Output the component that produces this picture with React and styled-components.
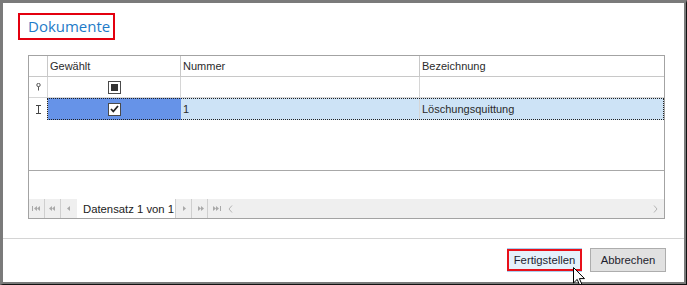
import React from 'react'
import styled, {createGlobalStyle} from 'styled-components'

const Global = createGlobalStyle`
  html, body {
    margin: 0;
    padding: 0;
    background: #fff;
  }
`

const Window = styled.div`
  position: relative;
  width: 687px;
  height: 285px;
  box-sizing: border-box;
  border-top: 3px solid #7a7a7a;
  border-left: 3px solid #7a7a7a;
  border-right: 1px solid #111;
  border-bottom: 1px solid #111;
  box-shadow: inset -2px -2px 0 #7a7a7a;
  background: #fff;
  overflow: hidden;
  display: flex;
  flex-direction: column;
  font-family: "Liberation Sans", Arial, sans-serif;
`

const TitleBox = styled.div`
  align-self: flex-start;
  margin: 10px 0 0 15px;
  width: 97px;
  height: 27px;
  box-sizing: border-box;
  border: 2px solid #e3000f;
  padding-left: 8px;
  line-height: 22px;
  font-family: "Open Sans", "Noto Sans", sans-serif;
  font-size: 15px;
  color: #1e7bc8;
`

const Grid = styled.div`
  margin: 15px 0 0 25px;
  width: 637px;
  height: 164px;
  box-sizing: border-box;
  border: 1px solid #a3a3a3;
  display: flex;
  flex-direction: column;
  font-size: 11px;
  color: #2b2b2b;
`

const Row = styled.div`
  position: relative;
  display: grid;
  grid-template-columns: 19px 133px 239px 1fr;
  height: ${p => p.h}px;
  box-sizing: border-box;
  border-bottom: ${p => (p.line ? `1px solid ${p.line}` : 'none')};

  ${p => p.focused && `
    &::after {
      content: '';
      position: absolute;
      left: 18px;
      right: 0;
      top: 0;
      bottom: 0;
      border: 1px dotted #222;
      pointer-events: none;
    }
  `}
`

const Cell = styled.div`
  display: flex;
  align-items: center;
  justify-content: ${p => (p.center ? 'center' : 'flex-start')};
  padding-left: ${p => (p.center ? 0 : 2)}px;
  border-right: ${p => (p.last ? 'none' : `1px solid ${p.line || '#d6d6d6'}`)};
  background: ${p => p.bg || 'transparent'};
  white-space: nowrap;
  overflow: hidden;
`

const Check = styled.span`
  width: 13px;
  height: 13px;
  box-sizing: border-box;
  border: 1px solid #4a4a4a;
  background: #fff;
  display: flex;
  align-items: center;
  justify-content: center;
`

const Indeterminate = styled.span`
  width: 7px;
  height: 7px;
  background: #333;
`

const Filler = styled.div`
  flex: 1;
  border-bottom: 1px solid #a8a8a8;
`

const Strip = styled.div`
  height: 28px;
`

const Nav = styled.div`
  height: 19px;
  background: #efefef;
  display: flex;
  align-items: stretch;
`

const NavButton = styled.div`
  width: 16px;
  flex: none;
  box-sizing: border-box;
  border-right: ${p => (p.sep ? '1px solid #cfcfcf' : 'none')};
  display: flex;
  align-items: center;
  justify-content: center;
  color: #a9a9a9;
`

const NavText = styled.div`
  width: 99px;
  flex: none;
  box-sizing: border-box;
  background: #fff;
  border-right: 1px solid #cfcfcf;
  padding-left: 6px;
  display: flex;
  align-items: center;
  font-size: 11.3px;
  color: #222;
  white-space: nowrap;
  overflow: hidden;
`

const ScrollTrack = styled.div`
  flex: 1;
  display: flex;
  align-items: center;
  justify-content: space-between;
  padding: 0 6px 0 4px;
  color: #b4b4b4;
`

const Divider = styled.div`
  margin-top: 19px;
  border-top: 1px solid #d4d4d4;
  margin-right: 2px;
`

const Footer = styled.div`
  display: flex;
  justify-content: flex-end;
  gap: 8px;
  padding: 9px 20px 0 0;
`

const Button = styled.div`
  position: relative;
  width: ${p => p.w}px;
  height: 24px;
  box-sizing: border-box;
  display: flex;
  align-items: center;
  justify-content: center;
  font-size: 11.3px;
  color: #1e1e2e;
  background: ${p => (p.primary ? '#e5f1fb' : '#e1e1e1')};
  border: 1px solid ${p => (p.primary ? '#a9cdef' : '#adadad')};

  ${p => p.marked && `
    &::after {
      content: '';
      position: absolute;
      left: -1px;
      right: -1px;
      top: 0;
      bottom: 0;
      border: 2px solid #e8101a;
    }
  `}
`

const Cursor = styled.svg`
  position: absolute;
  left: 570px;
  top: 264px;
`

const Tri = ({dir = 'left', bar, count = 1}) => {
  const w = count * 3 + (bar ? 2 : 0) + 1
  const parts = []
  for (let i = 0; i < count; i++) {
    const x = (bar ? 2 : 0) + i * 3
    parts.push(<path key={i} d={`M${x + 3} 1 L${x} 3.5 L${x + 3} 6 Z`} />)
  }
  return (
    <svg width={w + 1} height="7" viewBox={`0 0 ${w + 1} 7`} fill="currentColor"
      style={dir === 'right' ? {transform: 'scaleX(-1)'} : null}>
      {bar && <rect x="0" y="1" width="1" height="5" />}
      {parts}
    </svg>
  )
}

const Chevron = ({dir}) => (
  <svg width="5" height="8" viewBox="0 0 5 8" fill="none" stroke="currentColor" strokeWidth="1">
    {dir === 'left' ? <path d="M4 0.5 L1 4 L4 7.5" /> : <path d="M1 0.5 L4 4 L1 7.5" />}
  </svg>
)

const PinIcon = () => (
  <svg width="5" height="8" viewBox="0 0 5 8">
    <circle cx="2.5" cy="2" r="1.7" fill="#fff" stroke="#555" strokeWidth="1" />
    <rect x="2" y="3.5" width="1" height="4" fill="#555" />
  </svg>
)

const EditIcon = () => (
  <svg width="7" height="9" viewBox="0 0 7 9" stroke="#444" strokeWidth="1">
    <path d="M1 0.5 H6 M3.5 0.5 V8.5 M1 8.5 H6" />
  </svg>
)

const Tick = () => (
  <svg width="9" height="8" viewBox="0 0 9 8">
    <path d="M1 4 L3.3 6.5 L8 1" fill="none" stroke="#222" strokeWidth="1.8" />
  </svg>
)

export default function App() {
  return (
    <Window>
      <Global />
      <TitleBox>Dokumente</TitleBox>

      <Grid>
        <Row h={21} line="#c8c8c8">
          <Cell line="#c8c8c8" />
          <Cell line="#c8c8c8">Gewählt</Cell>
          <Cell line="#c8c8c8">Nummer</Cell>
          <Cell last>Bezeichnung</Cell>
        </Row>
        <Row h={21} line="#d6d6d6">
          <Cell center><PinIcon /></Cell>
          <Cell center><Check><Indeterminate /></Check></Cell>
          <Cell />
          <Cell last />
        </Row>
        <Row h={22} focused>
          <Cell center><EditIcon /></Cell>
          <Cell center bg="#6693e8" line="#6693e8"><Check><Tick /></Check></Cell>
          <Cell bg="#cde3f6">1</Cell>
          <Cell last bg="#cde3f6">Löschungsquittung</Cell>
        </Row>
        <Filler />
        <Strip />
        <Nav>
          <NavButton sep><Tri bar count={2} /></NavButton>
          <NavButton sep><Tri count={2} /></NavButton>
          <NavButton><Tri /></NavButton>
          <NavText>Datensatz 1 von 1</NavText>
          <NavButton sep><Tri dir="right" /></NavButton>
          <NavButton sep><Tri dir="right" count={2} /></NavButton>
          <NavButton><Tri dir="right" bar count={2} /></NavButton>
          <ScrollTrack>
            <Chevron dir="left" />
            <Chevron dir="right" />
          </ScrollTrack>
        </Nav>
      </Grid>

      <Divider />
      <Footer>
        <Button w={75} primary marked>Fertigstellen</Button>
        <Button w={76}>Abbrechen</Button>
      </Footer>

      <Cursor width="12" height="20" viewBox="0 0 12 20">
        <path d="M0.5 0.5 L0.5 16 L4.2 12.4 L6.8 18.5 L9 17.6 L6.4 11.6 L11.5 11.6 Z"
          fill="#fff" stroke="#000" strokeWidth="1" />
      </Cursor>
    </Window>
  )
}
